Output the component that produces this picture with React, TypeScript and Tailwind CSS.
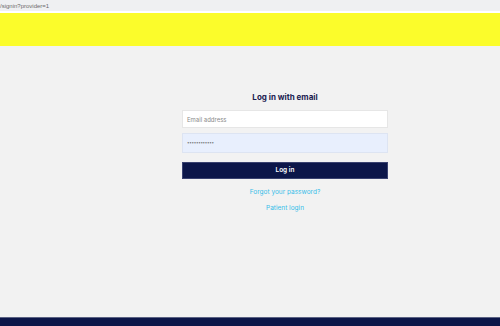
export default function App() {
  return (
    <div className="flex h-[326px] w-[500px] flex-col overflow-hidden bg-[#f2f2f2]" style={{ fontFamily: 'Inter, "Open Sans", sans-serif' }}>
      <div className="flex h-[11px] items-center bg-[#eff0f2] text-[6px] leading-none text-[#6b6b6b]" style={{ fontFamily: '"Liberation Sans", sans-serif' }}>
        /signin?provider=1
      </div>
      <div className="h-[2px] bg-white" />
      <div className="h-[33px] bg-[#fbfc2b]" />
      <div className="flex flex-1 flex-col pl-[182px] pt-[46px]">
        <div className="flex w-[206px] flex-col items-center">
          <div className="text-[8px] font-bold leading-[10px] text-[#1b2050]">Log in with email</div>
          <div className="mt-[8px] flex h-[18px] w-full items-center border border-[#e6e6e6] bg-white px-[4px] text-[6px] text-[#8a8a8a]">
            Email address
          </div>
          <div className="mt-[5px] flex h-[20px] w-full items-center border border-[#dde4f2] bg-[#e8effd] px-[4px] text-[4.5px] leading-none tracking-[-0.3px] text-[#7a7a7a]">
            ••••••••••••
          </div>
          <div className="mt-[9px] flex h-[17px] w-full items-center justify-center border border-[#3a4270] bg-[#0c1649] text-[6.5px] font-semibold text-white">
            Log in
          </div>
          <div className="mt-[8px] text-[6.5px] leading-[10px] text-[#37bde9]">Forgot your password?</div>
          <div className="mt-[6px] text-[6.5px] leading-[10px] text-[#37bde9]">Patient login</div>
        </div>
      </div>
      <div className="h-[1px] bg-[#5b6283]" />
      <div className="h-[8px] bg-[#0c1649]" />
    </div>
  );
}
